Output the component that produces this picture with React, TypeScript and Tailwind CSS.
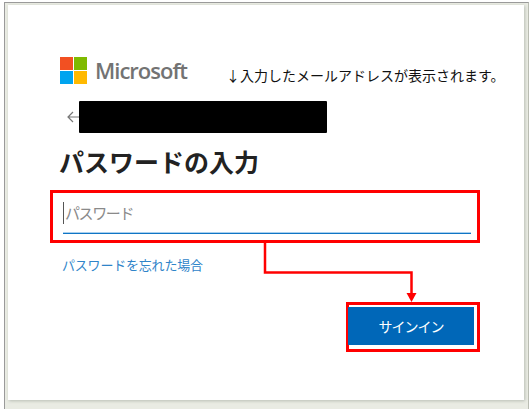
const jp = "font-['Noto_Sans_CJK_JP','Noto_Sans_CJK_SC',sans-serif]";

function MicrosoftLogo() {
  return (
    <svg width="27" height="27" viewBox="0 0 27 27" className="shrink-0">
      <rect x="0" y="0" width="13" height="13" fill="#f25022" />
      <rect x="14" y="0" width="13" height="13" fill="#7fba00" />
      <rect x="0" y="14" width="13" height="13" fill="#00a4ef" />
      <rect x="14" y="14" width="13" height="13" fill="#ffb900" />
    </svg>
  );
}

function Connector() {
  return (
    <svg className="absolute left-[260px] top-[241px]" width="160" height="64" viewBox="0 0 160 64">
      <path d="M5 2V31.5H151.5V54" fill="none" stroke="#ff0000" strokeWidth="2.5" />
      <path d="M146.5 52H156.5L151.5 61Z" fill="#ff0000" />
    </svg>
  );
}

export default function App() {
  return (
    <div className={`relative h-[409px] w-[531px] overflow-hidden bg-white pl-[4px] pt-[2px] ${jp}`}>
      <div className="h-[407px] w-[525px] border-l border-r border-t border-[#9a9a9a] border-r-[#b9bcb2] bg-[#e9ebe3] pl-[3px] pt-[2px]">
        <div className="h-[395px] w-[516px] bg-white pl-[52px] pt-[50px] shadow-[1px_1px_3px_#b8bdb4]">
          <div className="flex items-center">
            <MicrosoftLogo />
            <span className="ml-[8px] w-[92px] font-['Open_Sans',sans-serif] text-[22px] font-semibold leading-[27px] tracking-[-1px] text-[#737373]">
              Microsoft
            </span>
            <span className="ml-[39px] mt-[10px] whitespace-nowrap text-[14px] leading-[20px] text-[#111111]">
              ↓入力したメールアドレスが表示されます。
            </span>
          </div>

          <div className="ml-[7px] mt-[16px] flex h-[32px] items-center">
            <svg width="12" height="12" viewBox="0 0 12 12" className="shrink-0">
              <path d="M12 6H1M6 1L1 6L6 11" fill="none" stroke="#777777" strokeWidth="1.2" />
            </svg>
            <div className="h-[32px] w-[248px] rounded-[1px] bg-black" />
          </div>

          <h1 className="-ml-[1px] mt-[12px] text-[25px] font-bold leading-[32px] text-[#222222]">パスワードの入力</h1>

          <div className="-ml-[10px] mt-[13px] h-[53px] w-[430px] border-[3px] border-[#ff0000] pl-[10px] pr-[6px] pt-[9px]">
            <div className="flex h-[30px] items-start">
              <div className="h-[22px] w-px bg-[#555555]" />
              <span className="ml-[1px] mt-[1px] text-[15px] leading-[20px] tracking-[-1.4px] text-[#8a8a8a]">パスワード</span>
            </div>
            <div className="h-px bg-[#a9d0ee]" />
            <div className="h-px bg-[#0f75c5]" />
          </div>

          <a className="ml-[2px] mt-[12px] block text-[13px] leading-[20px] tracking-[-0.2px] text-[#2f84c9]">パスワードを忘れた場合</a>

          <div className="ml-[286px] mt-[27px] h-[50px] w-[134px] border-[3px] border-[#ff0000] pt-[2px]">
            <button className="-ml-px h-[38px] w-[126px] bg-[#0067b8] text-[14px] leading-[38px] tracking-[-1px] text-white">サインイン</button>
          </div>
        </div>
      </div>
      <Connector />
    </div>
  );
}
